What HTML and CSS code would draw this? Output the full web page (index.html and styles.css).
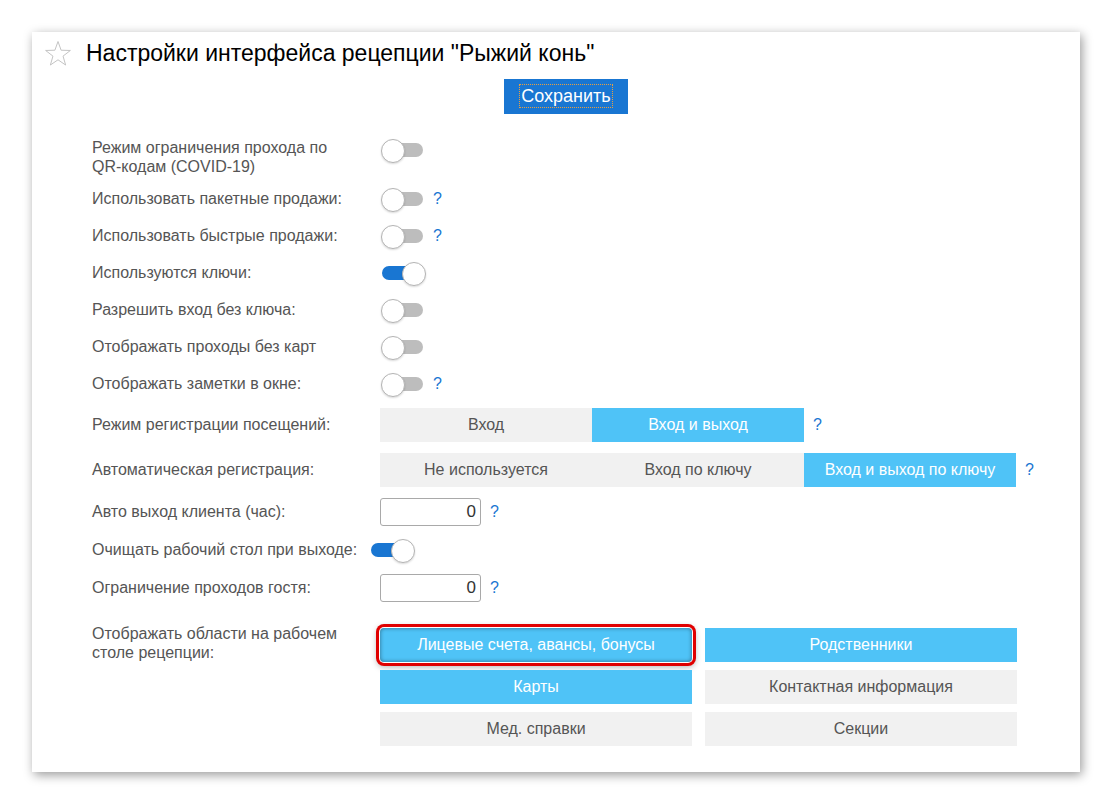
FILE: index.html
```html
<!DOCTYPE html>
<html lang="ru">
<head>
  <meta charset="UTF-8" />
  <title>Настройки интерфейса рецепции</title>
  <link rel="stylesheet" href="styles.css">
</head>
<body>
  <div class="panel">
    <div class="head">
      <svg class="star" width="28" height="27" viewBox="0 0 28 27">
        <polygon points="14,1.5 17.12,10.21 26.36,10.48 19.04,16.14 21.64,25.02 14,19.8 6.36,25.02 8.96,16.14 1.64,10.48 10.88,10.21" fill="none" stroke="#c4c4c4" stroke-width="1"/>
      </svg>
      <h1>Настройки интерфейса рецепции "Рыжий конь"</h1>
    </div>

    <div class="content">
      <div class="actions">
        <button class="save"><span>Сохранить</span></button>
      </div>

      <div class="rows">
        <div class="row row-top">
          <div class="label">Режим ограничения прохода по<br>QR-кодам (COVID-19)</div>
          <span class="switch"></span>
        </div>
        <div class="row">
          <div class="label">Использовать пакетные продажи:</div>
          <span class="switch"></span><span class="help">?</span>
        </div>
        <div class="row">
          <div class="label">Использовать быстрые продажи:</div>
          <span class="switch"></span><span class="help">?</span>
        </div>
        <div class="row">
          <div class="label">Используются ключи:</div>
          <span class="switch on"></span>
        </div>
        <div class="row">
          <div class="label">Разрешить вход без ключа:</div>
          <span class="switch"></span>
        </div>
        <div class="row">
          <div class="label">Отображать проходы без карт</div>
          <span class="switch"></span>
        </div>
        <div class="row">
          <div class="label">Отображать заметки в окне:</div>
          <span class="switch"></span><span class="help">?</span>
        </div>
        <div class="row row-seg">
          <div class="label">Режим регистрации посещений:</div>
          <div class="seg">
            <button>Вход</button>
            <button class="active">Вход и выход</button>
          </div>
          <span class="help">?</span>
        </div>
        <div class="row row-seg">
          <div class="label">Автоматическая регистрация:</div>
          <div class="seg">
            <button>Не используется</button>
            <button>Вход по ключу</button>
            <button class="active">Вход и выход по ключу</button>
          </div>
          <span class="help">?</span>
        </div>
        <div class="row row-num">
          <div class="label">Авто выход клиента (час):</div>
          <input class="num" type="text" value="0"><span class="help">?</span>
        </div>
        <div class="row">
          <div class="label">Очищать рабочий стол при выходе:</div>
          <span class="switch on shifted"></span>
        </div>
        <div class="row row-num">
          <div class="label">Ограничение проходов гостя:</div>
          <input class="num" type="text" value="0"><span class="help">?</span>
        </div>
        <div class="row row-areas">
          <div class="label">Отображать области на рабочем<br>столе рецепции:</div>
          <div class="areas">
            <button class="area active marked">Лицевые счета, авансы, бонусы</button>
            <button class="area active">Родственники</button>
            <button class="area active">Карты</button>
            <button class="area">Контактная информация</button>
            <button class="area">Мед. справки</button>
            <button class="area">Секции</button>
          </div>
        </div>
      </div>
    </div>
  </div>
</body>
</html>
```

FILE: styles.css
```css
* {
  box-sizing: border-box;
}

body {
  margin: 0;
  background: #fff;
  font-family: "Liberation Sans", Arial, sans-serif;
}

.panel {
  margin: 32px;
  background: #fff;
  padding: 6px 0 26px;
  box-shadow: 2px 3px 10px rgba(0, 0, 0, 0.4);
}

.head {
  display: flex;
  align-items: center;
  height: 30px;
  padding-left: 12px;
}

.star {
  display: block;
}

.head h1 {
  margin: 0 0 0 14px;
  font-size: 23px;
  font-weight: normal;
  color: #000;
}

.content {
  padding: 0 40px 0 60px;
}

.actions {
  display: flex;
  justify-content: center;
  margin-top: 11px;
}

.save {
  width: 124px;
  height: 35px;
  border: none;
  background: #1976d2;
  color: #fff;
  font-family: inherit;
  font-size: 18px;
  padding: 0;
}

.save span {
  border: 1px dotted #e8a040;
  padding: 1px 1px;
}

.rows {
  margin-top: 24px;
}

.row {
  display: flex;
  align-items: center;
  height: 37px;
}

.row-top {
  height: 42.5px;
  align-items: flex-start;
}

.row-seg {
  height: 45px;
}

.row-num {
  height: 39px;
}

.row-areas {
  height: auto;
  align-items: flex-start;
  padding-top: 20.5px;
}

.label {
  width: 288px;
  flex-shrink: 0;
  font-size: 16px;
  line-height: 18.5px;
  color: #555;
}

.row-top .label {
  margin-top: 1px;
}

.row-areas .label {
  margin-top: -3px;
}

.switch {
  position: relative;
  display: inline-block;
  width: 44px;
  height: 22px;
}

.row-top .switch {
  margin-top: 1px;
}

.switch::before {
  content: "";
  position: absolute;
  left: 2px;
  right: 1px;
  top: 4px;
  height: 14px;
  border-radius: 7px;
  background: #bdbdbd;
}

.switch::after {
  content: "";
  position: absolute;
  left: 1px;
  top: 0;
  width: 22px;
  height: 22px;
  border-radius: 50%;
  background: #fff;
  border: 1px solid #b4b4b4;
  box-shadow: 0 1px 2px rgba(0, 0, 0, 0.15);
}

.switch.on::before {
  background: #1976d2;
}

.switch.on::after {
  left: 22px;
}

.switch.shifted {
  margin-left: -11px;
}

.help {
  margin-left: 9px;
  font-size: 16px;
  color: #1976d2;
}

.seg {
  display: flex;
}

.seg button {
  width: 212px;
  height: 34px;
  border: none;
  padding: 0;
  background: #f1f1f1;
  color: #555;
  font-family: inherit;
  font-size: 16px;
}

.seg button.active {
  background: #4fc3f7;
  color: #fff;
}

.num {
  width: 101px;
  height: 28px;
  border: 1px solid #a9a9a9;
  border-radius: 3px;
  padding: 0 4px;
  text-align: right;
  font-family: inherit;
  font-size: 17px;
  color: #333;
}

.areas {
  display: grid;
  grid-template-columns: 312px 312px;
  column-gap: 13px;
  row-gap: 8px;
}

.area {
  height: 34px;
  border: none;
  padding: 0;
  background: #f1f1f1;
  color: #555;
  font-family: inherit;
  font-size: 16px;
}

.area.active {
  background: #4fc3f7;
  color: #fff;
}

.area.marked {
  border-radius: 4px;
  box-shadow: inset 0 0 4px rgba(0, 0, 0, 0.45), 0 0 0 1px #fff, 0 0 0 4px #e00000, 0 2px 6px 3px rgba(0, 0, 0, 0.3);
}
```
